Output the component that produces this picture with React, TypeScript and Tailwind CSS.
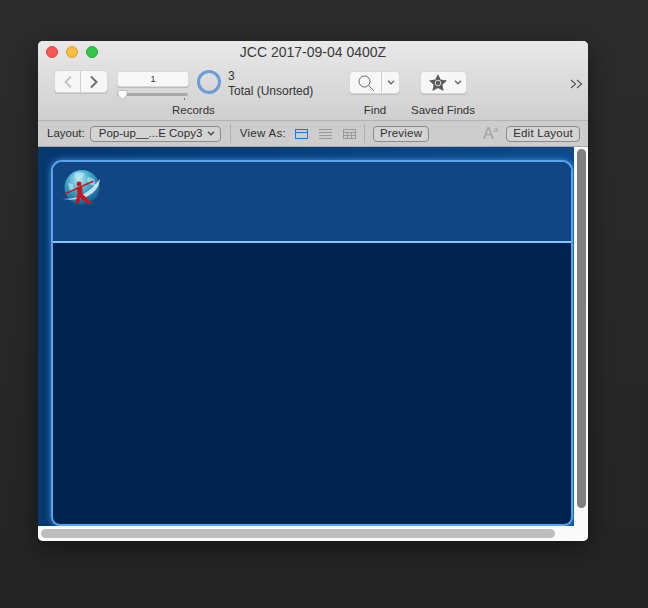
import React from "react";

const font = { fontFamily: '"Liberation Sans", Arial, sans-serif' };

function Globe() {
  return (
    <svg width="42" height="38" viewBox="0 0 42 38">
      <defs>
        <radialGradient id="g" cx="42%" cy="28%" r="78%">
          <stop offset="0" stopColor="#b5e8f2" />
          <stop offset="0.45" stopColor="#3aa6c8" />
          <stop offset="1" stopColor="#0a4f80" />
        </radialGradient>
      </defs>
      <circle cx="23" cy="18.5" r="17.5" fill="url(#g)" />
      <path d="M16 4 q6 -2 10 1 l-3 4 -5 1 -3 -2z M29 8 l6 2 2 7 -5 -1 -4 -4z M9 14 l5 1 1 6 -4 1z" fill="#d5eef5" opacity="0.55" />
      <path d="M1 29 Q22 34 41 10 Q40 22 28 27.5 Q13 33 1 29z" fill="#e4eef8" opacity="0.85" />
      <path d="M6 24 L34 11.5 L34.5 13 L6 25.5z" fill="#c8141c" />
      <circle cx="20" cy="15" r="2.4" fill="#c8141c" />
      <path d="M18 18.5 L23 17 L23.5 25 L34 35 L29 35 L21 29 L20 35 L16 35 L18.5 25z" fill="#c8141c" />
    </svg>
  );
}

function Nav() {
  return (
    <div className="flex h-[23px] w-[54px] rounded-[4px] bg-[#f7f7f7] border border-[#d6d6d6] shadow-[0_1px_0_#bdbdbd]">
      <div className="flex w-[26px] items-center justify-center border-r border-[#cfcfcf]">
        <svg width="10" height="14" viewBox="0 0 10 14" fill="none" stroke="#c4c4c4" strokeWidth="2"><path d="M8 1.5 L2.5 7 L8 12.5" /></svg>
      </div>
      <div className="flex flex-1 items-center justify-center">
        <svg width="10" height="14" viewBox="0 0 10 14" fill="none" stroke="#6e6e6e" strokeWidth="2"><path d="M2 1.5 L7.5 7 L2 12.5" /></svg>
      </div>
    </div>
  );
}

function Caret({ color = "#666", w = 8 }: { color?: string; w?: number }) {
  return (
    <svg width={w} height="5" viewBox="0 0 8 5" fill="none" stroke={color} strokeWidth="1.3"><path d="M1 .8 L4 3.8 L7 .8" /></svg>
  );
}

export default function App() {
  return (
    <div style={font} className="h-[608px] w-[648px] bg-gradient-to-b from-[#2c2c2c] to-[#242424] pl-[38px] pt-[41px]">
      <div className="flex h-[500px] w-[550px] flex-col overflow-hidden rounded-[5px] bg-[#f9f9f9] shadow-[0_8px_24px_rgba(0,0,0,0.45)]">
        {/* toolbar */}
        <div className="h-[80px] border-b border-[#b4b4b4] bg-gradient-to-b from-[#e9e9e9] to-[#cfcfcf]">
          <div className="flex h-[22px] items-center pl-[8px]">
            <span className="h-3 w-3 rounded-full bg-[#fc5753] border border-[#df4744]" />
            <span className="ml-2 h-3 w-3 rounded-full bg-[#fdbc40] border border-[#de9f34]" />
            <span className="ml-2 h-3 w-3 rounded-full bg-[#33c748] border border-[#27aa35]" />
            <span className="flex-1 pr-[60px] text-center text-[14px] leading-none text-[#3a3a3a]">JCC 2017-09-04 0400Z</span>
          </div>
          <div className="flex h-[58px] pl-[16px] text-[11.5px] leading-none text-[#333]">
            <div className="pt-[7px]"><Nav /></div>
            <div className="ml-[9px] flex w-[72px] flex-col pt-[8px]">
              <div className="flex h-[16px] items-center justify-center rounded-[3px] bg-[#f8f8f8] border border-[#d8d8d8] text-[9px] text-[#333] shadow-[0_1px_0_#bbb]">1</div>
              <div className="relative mt-[6px] h-[3px] w-[71px] rounded bg-[#a9a9a9]">
                <svg className="absolute left-[0px] top-[-3px]" width="11" height="11" viewBox="0 0 11 11"><path d="M1 1.5 Q1 .5 2 .5 H9 Q10 .5 10 1.5 V5 L5.5 9.5 L1 5z" fill="#fbfbfb" stroke="#b0b0b0" strokeWidth=".7" /></svg>
                <span className="absolute left-[67px] top-[5px] h-[2px] w-px bg-[#777]" />
              </div>
              <div className="mt-[9px] pl-[55px] whitespace-nowrap">Records</div>
            </div>
            <div className="ml-[8px] pt-[7px]">
              <div className="h-[24px] w-[24px] rounded-full border-[3px] border-[#6b9cd8]" />
            </div>
            <div className="ml-[7px] flex w-[104px] flex-col gap-[3px] pt-[7px] text-[12px] whitespace-nowrap">
              <span>3</span>
              <span>Total (Unsorted)</span>
            </div>
            <div className="ml-[17px] flex w-[71px] flex-col items-start pt-[8px]">
              <div className="flex h-[23px] w-[51px] rounded-[4px] bg-[#f7f7f7] border border-[#d8d8d8] shadow-[0_1px_0_#bdbdbd]">
                <div className="flex w-[32px] items-center justify-center border-r border-[#cfcfcf]">
                  <svg width="18" height="18" viewBox="0 0 18 18" fill="none" stroke="#666" strokeWidth="1"><circle cx="7.5" cy="7.5" r="5.5" /><path d="M11.5 11.5 L17 17" /></svg>
                </div>
                <div className="flex flex-1 items-center justify-center"><Caret /></div>
              </div>
              <div className="mt-[11px] w-[51px] pl-[1px] text-center">Find</div>
            </div>
            <div className="flex flex-col items-start pt-[8px]">
              <div className="flex h-[23px] w-[47px] items-center gap-[6px] rounded-[4px] bg-[#f7f7f7] border border-[#d8d8d8] pl-[7px] shadow-[0_1px_0_#bdbdbd]">
                <svg width="20" height="18" viewBox="0 0 20 18"><path d="M10 0 L12.6 5.6 L19 6.4 L14.4 10.8 L15.6 17 L10 14 L4.4 17 L5.6 10.8 L1 6.4 L7.4 5.6z" fill="#5a5a5a" /><circle cx="10" cy="9" r="2.8" fill="none" stroke="#dcdcdc" strokeWidth="1" /></svg>
                <Caret />
              </div>
              <div className="mt-[11px] -ml-[9px] whitespace-nowrap">Saved Finds</div>
            </div>
            <div className="ml-[95px] pt-[16px]">
              <svg width="13" height="10" viewBox="0 0 13 10" fill="none" stroke="#555" strokeWidth="1.2"><path d="M1 1 L5.5 5 L1 9 M7 1 L11.5 5 L7 9" /></svg>
            </div>
          </div>
        </div>
        {/* layout bar */}
        <div className="flex h-[26px] items-center border-b border-[#a8a8a8] bg-[#cdcdcd] pl-[9px] text-[11.5px] leading-none text-[#2f2f2f]">
          <span>Layout:</span>
          <div className="ml-[5px] flex h-[16px] w-[131px] items-center justify-between rounded-[4px] border border-[#8b8b8b] bg-[#d4d4d4] pl-[8px] pr-[5px] whitespace-nowrap">
            <span>Pop-up__...E Copy3</span><Caret color="#444" />
          </div>
          <div className="ml-[9px] h-[19px] w-px bg-[#b0b0b0]" />
          <span className="ml-[9px] tracking-[0.3px]">View As:</span>
          <svg className="ml-[9px]" width="13" height="10" viewBox="0 0 13 10" fill="none" stroke="#1678e6" strokeWidth="1"><rect x=".5" y=".5" width="12" height="9" /><path d="M0 3.5 H13" /></svg>
          <svg className="ml-[11px]" width="13" height="10" viewBox="0 0 13 10" fill="none" stroke="#9a9a9a" strokeWidth="1"><path d="M0 .5 H13 M0 3.5 H13 M0 6.5 H13 M0 9.5 H13" /></svg>
          <svg className="ml-[11px]" width="13" height="10" viewBox="0 0 13 10" fill="none" stroke="#9a9a9a" strokeWidth="1"><rect x=".5" y=".5" width="12" height="9" /><path d="M0 3.5 H13 M0 6.5 H13 M4.5 3 V10 M8.5 3 V10" /></svg>
          <div className="ml-[8px] h-[19px] w-px bg-[#b0b0b0]" />
          <div className="ml-[8px] flex h-[16px] w-[56px] items-center justify-center rounded-[4px] border border-[#8b8b8b] bg-[#d4d4d4] tracking-[0.2px]">Preview</div>
          <span className="ml-[54px] flex w-[14px] items-start text-[16px] text-[#a3a3a3]">A<span className="text-[8px]">a</span></span>
          <div className="ml-[9px] flex h-[16px] w-[74px] items-center justify-center rounded-[4px] border border-[#8b8b8b] bg-[#d4d4d4] tracking-[0.2px]">Edit Layout</div>
        </div>
        {/* content */}
        <div className="flex h-[379px]">
          <div className="h-full w-[536px] bg-gradient-to-r from-[#06376f] to-[#0c4a8c] pl-[13px] pt-[13px]">
            <div className="h-[366px] w-[522px] overflow-hidden rounded-t-[11px] rounded-b-[9px] border-2 border-[#5aa4ee] bg-[#00224e] shadow-[0_0_6px_#3f8fe0]">
              <div className="h-[81px] border-b-2 border-[#8cc4f5] bg-[#114584] pl-[6px] pt-[7px]">
                <Globe />
              </div>
            </div>
          </div>
          <div className="flex-1 bg-[#fafafa] pl-[3px] pr-[2px] pt-[2px]">
            <div className="h-[359px] w-[9px] rounded-full bg-[#7f7f7f]" />
          </div>
        </div>
        {/* hscroll */}
        <div className="flex-1 bg-[#fafafa] pl-[3px] pt-[3px]">
          <div className="h-[9px] w-[514px] rounded-full bg-[#bdbdbd]" />
        </div>
      </div>
    </div>
  );
}
